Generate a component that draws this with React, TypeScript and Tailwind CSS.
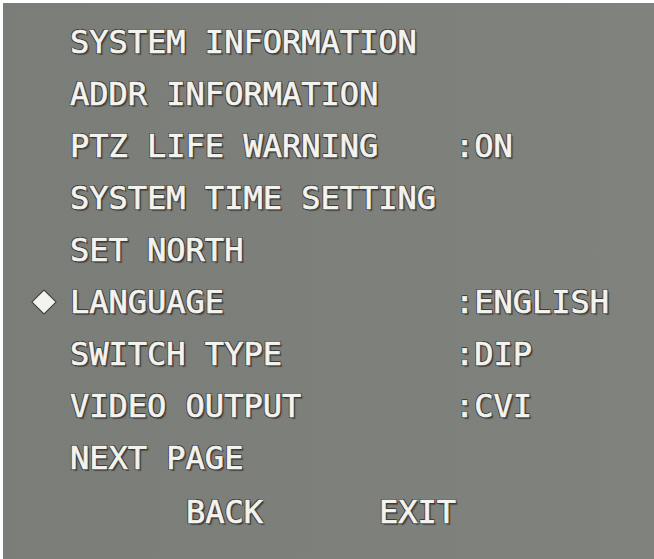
import React from "react";

type Row = { label: string; value?: string; selected?: boolean };

const rows: Row[] = [
  { label: "SYSTEM INFORMATION" },
  { label: "ADDR INFORMATION" },
  { label: "PTZ LIFE WARNING", value: ":ON" },
  { label: "SYSTEM TIME SETTING" },
  { label: "SET NORTH" },
  { label: "LANGUAGE", value: ":ENGLISH", selected: true },
  { label: "SWITCH TYPE", value: ":DIP" },
  { label: "VIDEO OUTPUT", value: ":CVI" },
  { label: "NEXT PAGE" },
];

// OSD style: light glyphs with a thin dark outline
const osd =
  "text-[#f3f3ef] [-webkit-text-stroke:0.7px_#f3f3ef] [text-shadow:1px_1px_0_#3a3a38,-1px_-1px_0_#3a3a38,1px_-1px_0_#3a3a38,-1px_1px_0_#3a3a38,2px_2px_1px_#4a4a48]";

export default function App() {
  return (
    <div className="w-[654px] h-[559px] bg-white pt-[3px] pl-[3px] overflow-hidden">
      <div
        className={`w-full h-full bg-gradient-to-r from-[#7b7d78] to-[#80827d] pt-[13px] pl-[30px] font-['DejaVu_Sans_Mono',monospace] text-[32px] leading-[52px] whitespace-pre ${osd}`}
      >
        {rows.map((r) => (
          <div key={r.label} className="flex items-center h-[52px]">
            <div className="w-[37px] flex items-center">
              {r.selected && (
                <div className="w-[16px] h-[16px] ml-[3px] rotate-45 bg-[#f3f3ef] shadow-[0_0_0_1px_#3a3a38]" />
              )}
            </div>
            <span className="w-[385px]">{r.label}</span>
            {r.value && <span>{r.value}</span>}
          </div>
        ))}
        <div className="flex items-center h-[52px] mt-[2px] pl-[153px]">
          <span className="w-[193px]">BACK</span>
          <span>EXIT</span>
        </div>
      </div>
    </div>
  );
}
